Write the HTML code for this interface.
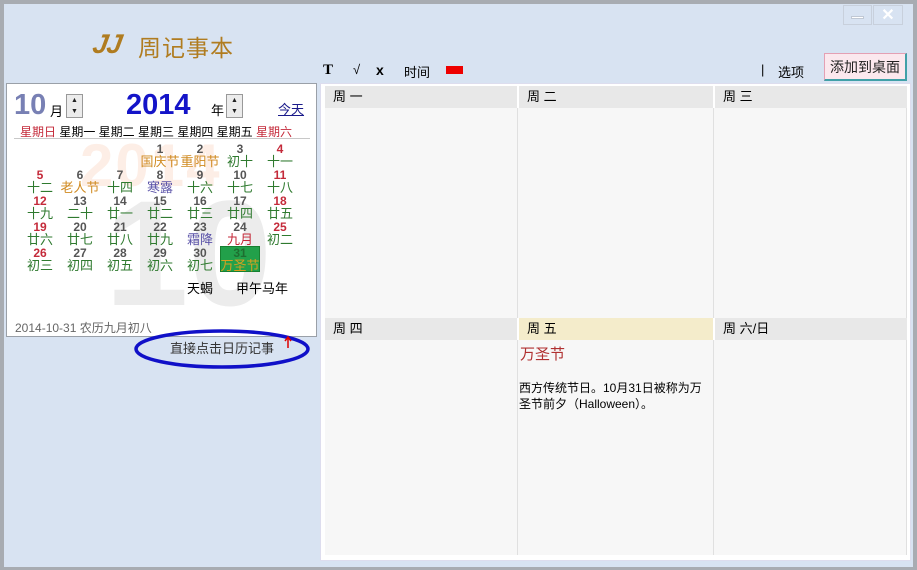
<!DOCTYPE html>
<html><head><meta charset="utf-8"><style>
*{margin:0;padding:0;box-sizing:border-box}
body{width:917px;height:570px;overflow:hidden;background:#a8acb2;position:relative;font-family:"Liberation Sans","Noto Sans CJK SC",sans-serif}
.a{position:absolute}
#win{left:4px;top:4px;width:909px;height:563px;background:#d8e3f2}
.c{position:absolute;width:40px;text-align:center;font-size:12px;line-height:13px;white-space:nowrap}
.n{font-weight:bold;color:#555}
.r{color:#c42a3a}
.l{color:#2f7a2f;font-size:13px}
.f{color:#d08a20;font-size:13px}
.t{color:#5a52a8;font-size:13px}
.hd{position:absolute;height:22px;background:#e8e8e8;font-size:13px;line-height:22px;padding-left:8px;color:#000}
.col{position:absolute;background:#f7f7f7;border-right:1px solid #e0e0e0}
.spin{position:absolute;width:17px;height:24px;background:#ececec;border:1px solid #999;font-size:7px;line-height:11px;text-align:center;color:#222}
</style></head><body>
<div id="win" class="a"></div>
<div class="a" style="left:843px;top:5px;width:29px;height:20px;border:1px solid #c8d0dc;background:#d8e3f2"></div>
<div class="a" style="left:851px;top:16px;width:13px;height:3px;background:#fff;border:1px solid #c0c8d4"></div>
<div class="a" style="left:873px;top:5px;width:30px;height:20px;border:1px solid #c8d0dc;color:#fff;font-size:16px;font-weight:bold;text-align:center;line-height:20px">✕</div>
<div class="a" style="left:93px;top:29px;font-size:27px;font-weight:900;font-style:italic;color:#b07c20;letter-spacing:-1px;transform:skewX(-10deg)">JJ</div>
<div class="a" style="left:138px;top:29px;font-size:23px;color:#b07c20;letter-spacing:1px">周记事本</div>
<div class="a" style="left:6px;top:83px;width:311px;height:254px;background:#fff;border:1px solid #9aa0a8"></div>
<div class="a" style="left:80px;top:138px;font-size:60px;font-weight:bold;color:#fdeee6;line-height:56px;letter-spacing:2px">2014</div>
<div class="a" style="left:105px;top:188px;font-size:150px;font-weight:bold;color:#ececec;line-height:130px">10</div>
<div class="a" style="left:14px;top:89px;font-size:29px;font-weight:bold;color:#7880b4;line-height:32px">10</div>
<div class="a" style="left:50px;top:101px;font-size:13px">月</div>
<div class="spin" style="left:66px;top:94px">▲<br>▼</div>
<div class="a" style="left:126px;top:89px;font-size:29px;font-weight:bold;color:#1414c8;line-height:32px">2014</div>
<div class="a" style="left:211px;top:100px;font-size:13px">年</div>
<div class="spin" style="left:226px;top:94px">▲<br>▼</div>
<div class="a" style="left:278px;top:99px;font-size:13px;color:#1a1a8a;text-decoration:underline">今天</div>
<div class="a" style="left:20px;top:123px;font-size:12px;white-space:nowrap;letter-spacing:0px;word-spacing:0px"><span style="color:#c42a3a">星期日</span> 星期一 星期二 星期三 星期四 星期五 <span style="color:#c42a3a">星期六</span></div>
<div class="a" style="left:14px;top:138px;width:296px;height:1px;background:#c8c8c8"></div>
<div class="a" style="left:220px;top:246px;width:40px;height:26px;background:#22a04a;border:1px solid #178030"></div>

<div class="c n" style="left:140px;top:143px">1</div><div class="c f" style="left:140px;top:155px">国庆节</div>
<div class="c n" style="left:180px;top:143px">2</div><div class="c f" style="left:180px;top:155px">重阳节</div>
<div class="c n" style="left:220px;top:143px">3</div><div class="c l" style="left:220px;top:155px">初十</div>
<div class="c n r" style="left:260px;top:143px">4</div><div class="c l" style="left:260px;top:155px">十一</div>

<div class="c n r" style="left:20px;top:169px">5</div><div class="c l" style="left:20px;top:181px">十二</div>
<div class="c n" style="left:60px;top:169px">6</div><div class="c f" style="left:60px;top:181px">老人节</div>
<div class="c n" style="left:100px;top:169px">7</div><div class="c l" style="left:100px;top:181px">十四</div>
<div class="c n" style="left:140px;top:169px">8</div><div class="c t" style="left:140px;top:181px">寒露</div>
<div class="c n" style="left:180px;top:169px">9</div><div class="c l" style="left:180px;top:181px">十六</div>
<div class="c n" style="left:220px;top:169px">10</div><div class="c l" style="left:220px;top:181px">十七</div>
<div class="c n r" style="left:260px;top:169px">11</div><div class="c l" style="left:260px;top:181px">十八</div>

<div class="c n r" style="left:20px;top:195px">12</div><div class="c l" style="left:20px;top:207px">十九</div>
<div class="c n" style="left:60px;top:195px">13</div><div class="c l" style="left:60px;top:207px">二十</div>
<div class="c n" style="left:100px;top:195px">14</div><div class="c l" style="left:100px;top:207px">廿一</div>
<div class="c n" style="left:140px;top:195px">15</div><div class="c l" style="left:140px;top:207px">廿二</div>
<div class="c n" style="left:180px;top:195px">16</div><div class="c l" style="left:180px;top:207px">廿三</div>
<div class="c n" style="left:220px;top:195px">17</div><div class="c l" style="left:220px;top:207px">廿四</div>
<div class="c n r" style="left:260px;top:195px">18</div><div class="c l" style="left:260px;top:207px">廿五</div>

<div class="c n r" style="left:20px;top:221px">19</div><div class="c l" style="left:20px;top:233px">廿六</div>
<div class="c n" style="left:60px;top:221px">20</div><div class="c l" style="left:60px;top:233px">廿七</div>
<div class="c n" style="left:100px;top:221px">21</div><div class="c l" style="left:100px;top:233px">廿八</div>
<div class="c n" style="left:140px;top:221px">22</div><div class="c l" style="left:140px;top:233px">廿九</div>
<div class="c n" style="left:180px;top:221px">23</div><div class="c t" style="left:180px;top:233px">霜降</div>
<div class="c n" style="left:220px;top:221px">24</div><div class="c l" style="left:220px;top:233px;color:#c42a3a">九月</div>
<div class="c n r" style="left:260px;top:221px">25</div><div class="c l" style="left:260px;top:233px">初二</div>

<div class="c n r" style="left:20px;top:247px">26</div><div class="c l" style="left:20px;top:259px">初三</div>
<div class="c n" style="left:60px;top:247px">27</div><div class="c l" style="left:60px;top:259px">初四</div>
<div class="c n" style="left:100px;top:247px">28</div><div class="c l" style="left:100px;top:259px">初五</div>
<div class="c n" style="left:140px;top:247px">29</div><div class="c l" style="left:140px;top:259px">初六</div>
<div class="c n" style="left:180px;top:247px">30</div><div class="c l" style="left:180px;top:259px">初七</div>
<div class="c n" style="left:220px;top:247px;color:#1e6e30">31</div><div class="c f" style="left:220px;top:259px;color:#d8a020">万圣节</div>

<div class="a" style="left:187px;top:278px;font-size:13px">天蝎</div>
<div class="a" style="left:236px;top:278px;font-size:13px">甲午马年</div>
<div class="a" style="left:15px;top:319px;font-size:12px;color:#666">2014-10-31 农历九月初八</div>
<svg class="a" style="left:133px;top:328px" width="180" height="42"><ellipse cx="89" cy="21" rx="86" ry="18" fill="none" stroke="#1010c8" stroke-width="3.5"/><path d="M155 20V10M152 13L155 9L158 13" stroke="#d00" stroke-width="1.5" fill="none"/></svg>
<div class="a" style="left:170px;top:338px;font-size:13px;color:#333">直接点击日历记事</div>
<div class="a" style="left:323px;top:62px;font-size:15px;font-weight:bold;font-family:'Liberation Serif',serif">T</div>
<div class="a" style="left:353px;top:62px;font-size:13px">√</div>
<div class="a" style="left:376px;top:62px;font-size:14px;font-weight:bold">x</div>
<div class="a" style="left:404px;top:62px;font-size:13px">时间</div>
<div class="a" style="left:446px;top:66px;width:17px;height:8px;background:#e00"></div>
<div class="a" style="left:761px;top:62px;font-size:13px">|</div>
<div class="a" style="left:778px;top:62px;font-size:13px">选项</div>
<div class="a" style="left:824px;top:53px;width:83px;height:28px;background:#fbe8ee;border:1px solid #e4a0b4;border-right:2px solid #40a0a8;border-bottom:2px solid #40a0a8;font-size:14px;line-height:26px;text-align:center;color:#222">添加到桌面</div>
<div class="a" style="left:320px;top:83px;width:591px;height:478px;background:#fff;border:1px solid #dde"></div>
<div class="col" style="left:325px;top:108px;width:193px;height:210px"></div>
<div class="col" style="left:518px;top:108px;width:196px;height:210px"></div>
<div class="col" style="left:714px;top:108px;width:193px;height:210px"></div>
<div class="hd" style="left:325px;top:86px;width:192px">周 一</div>
<div class="hd" style="left:519px;top:86px;width:194px">周 二</div>
<div class="hd" style="left:715px;top:86px;width:192px">周 三</div>
<div class="col" style="left:325px;top:340px;width:193px;height:215px"></div>
<div class="col" style="left:518px;top:340px;width:196px;height:215px"></div>
<div class="col" style="left:714px;top:340px;width:193px;height:215px"></div>
<div class="hd" style="left:325px;top:318px;width:192px">周 四</div>
<div class="hd" style="left:519px;top:318px;width:194px;background:#f4eccb">周 五</div>
<div class="hd" style="left:715px;top:318px;width:192px">周 六/日</div>
<div class="a" style="left:520px;top:343px;font-size:15px;color:#b03030">万圣节</div>
<div class="a" style="left:519px;top:380px;width:190px;font-size:12px;line-height:16px;color:#000">西方传统节日。10月31日被称为万圣节前夕（Halloween）。</div>
</body></html>
